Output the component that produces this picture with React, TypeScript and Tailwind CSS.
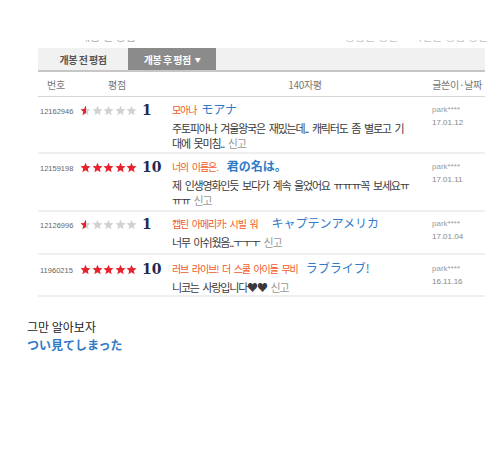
const kr = { fontFamily: '"Noto Sans CJK KR", "Noto Sans", sans-serif' };
const jp = { fontFamily: '"Noto Sans CJK JP", "Noto Sans", sans-serif' };
const latin = { fontFamily: '"Liberation Sans", "DejaVu Sans", sans-serif' };

type Row = {
  id: string;
  score: number;
  title: string;
  jp: string;
  jpBold?: boolean;
  gap: string;
  lines: string[];
  user: string;
  date: string;
  h: string;
  pt: string;
};

const rows: Row[] = [
  {
    id: "12162946",
    score: 1,
    title: "모아나",
    jp: "モアナ",
    gap: "ml-[5px]",
    lines: ["주토피아나 겨울왕국은 재밌는데.. 캐릭터도 좀 별로고 기", "대에 못미침.."],
    user: "park****",
    date: "17.01.12",
    h: "h-[57px]",
    pt: "pt-[4px]",
  },
  {
    id: "12159198",
    score: 10,
    title: "너의 이름은.",
    jp: "君の名は。",
    jpBold: true,
    gap: "ml-[9px]",
    lines: ["제 인생영화인듯 보다가 계속 울었어요 ㅠㅠㅠ꼭 보세요ㅠ", "ㅠㅠ"],
    user: "park****",
    date: "17.01.11",
    h: "h-[58px]",
    pt: "pt-[4px]",
  },
  {
    id: "12126996",
    score: 1,
    title: "캡틴 아메리카: 시빌 워",
    jp: "キャプテンアメリカ",
    gap: "ml-[14px]",
    lines: ["너무 아쉬웠음..ㅜㅜㅜ"],
    user: "park****",
    date: "17.01.04",
    h: "h-[43px]",
    pt: "pt-[3px]",
  },
  {
    id: "11960215",
    score: 10,
    title: "러브 라이브! 더 스쿨 아이돌 무비",
    jp: "ラブライブ!",
    gap: "ml-[8px]",
    lines: ["니코는 사랑입니다♥♥"],
    user: "park****",
    date: "16.11.16",
    h: "h-[42px]",
    pt: "pt-[5px]",
  },
];

function Star({ fill, uid }: { fill: "full" | "half" | "none"; uid: string }) {
  return (
    <svg width="11" height="11" viewBox="0 0 24 24">
      <defs>
        <linearGradient id={uid}>
          <stop offset="50%" stopColor="#e8222c" />
          <stop offset="50%" stopColor="#d2d2d2" />
        </linearGradient>
      </defs>
      <path
        d="M12 1.5l3.1 7.2 7.8.7-5.9 5.2 1.8 7.7L12 18.2l-6.8 4.1 1.8-7.7-5.9-5.2 7.8-.7z"
        fill={fill === "full" ? "#e8222c" : fill === "half" ? `url(#${uid})` : "#d2d2d2"}
      />
    </svg>
  );
}

function Stars({ score, rid }: { score: number; rid: string }) {
  return (
    <div className="flex items-center gap-[0.5px]">
      {[0, 1, 2, 3, 4].map((i) => {
        const v = score - i * 2;
        const f = v >= 2 ? "full" : v === 1 ? "half" : "none";
        return <Star key={i} fill={f} uid={`s${rid}${i}`} />;
      })}
    </div>
  );
}

export default function App() {
  return (
    <div className="w-[500px] h-[474px] bg-white overflow-hidden" style={kr}>
      {/* text cut off above the tabs */}
      <div className="h-[48px] relative">
        <div className="absolute top-[40px] left-[80px] h-[2px] overflow-hidden text-[11px] text-[#aaa] leading-[12px]">
          <div className="-mt-[10px]">개봉 전 평점</div>
        </div>
        <div className="absolute top-[40px] left-[345px] h-[2px] overflow-hidden text-[11px] text-[#c4c4c4] leading-[12px] flex gap-[14px]">
          <div className="-mt-[10px]">공감순 정렬</div>
          <div className="-mt-[10px]">최신순 평점 정렬</div>
        </div>
      </div>

      <div className="ml-[38px] w-[447px]">
        {/* tabs */}
        <div className="flex h-[24px] bg-[#f1f1f1] border-b-2 border-[#c6c6c6] text-[10px] font-bold tracking-[-0.5px]">
          <div className="w-[90px] flex items-center justify-center text-[#555]">개봉 전 평점</div>
          <div className="w-[88px] flex items-center justify-center bg-[#8b8b8b] text-white gap-[4px]">
            개봉 후 평점 <span className="text-[6px]">▼</span>
          </div>
        </div>

        {/* header */}
        <div className="flex items-center h-[25px] border-b border-[#d6d6d6] text-[10px] text-[#777] tracking-[-0.3px]">
          <div className="w-[40px] pl-[9px]">번호</div>
          <div className="w-[94px] pl-[30px]">평점</div>
          <div className="w-[256px] text-center pl-[10px]">140자평</div>
          <div className="flex-1 text-right pr-[3px]">글쓴이·날짜</div>
        </div>

        {rows.map((r) => (
          <div key={r.id} className={`flex ${r.h} border-b-2 border-[#efefef] ${r.pt}`}>
            <div className="w-[42px] pl-[2px] pt-[7px] text-[7.5px] text-[#666] leading-none" style={latin}>
              {r.id}
            </div>
            <div className="w-[92px] flex items-start pt-[4px]">
              <Stars score={r.score} rid={r.id} />
              <span
                className="ml-[5px] -mt-[2px] text-[14px] font-bold text-[#1e2a4f] leading-none"
                style={{ fontFamily: '"DejaVu Serif", "Liberation Serif", serif' }}
              >
                {r.score}
              </span>
            </div>
            <div className="w-[258px]">
              <div className="flex items-baseline leading-[16px] whitespace-nowrap">
                <span className="text-[10px] text-[#f05a28] tracking-[-1.1px] [word-spacing:2.5px]">{r.title}</span>
                <span
                  className={`${r.gap} text-[12px] text-[#2f7bc8] ${r.jpBold ? "font-bold" : ""}`}
                  style={jp}
                >
                  {r.jp}
                </span>
              </div>
              <div className="mt-[3px] text-[11px] text-[#3a3a3a] leading-[15px] tracking-[-1.2px] [word-spacing:2.5px] whitespace-nowrap">
                {r.lines.map((l, i) => (
                  <div key={i}>
                    {l}
                    {i === r.lines.length - 1 && <span className="text-[#999]"> 신고</span>}
                  </div>
                ))}
              </div>
            </div>
            <div className="flex-1 pl-[2px] pt-[2px] text-[8px] leading-[13px]" style={latin}>
              <div className="text-[#9a9a9a]">{r.user}</div>
              <div className="text-[#888]">{r.date}</div>
            </div>
          </div>
        ))}
      </div>

      <div className="ml-[27px] mt-[21px] text-[12px] leading-[18px]">
        <div className="text-[#222]">그만 알아보자</div>
        <div className="text-[#2f7bc8] font-bold" style={jp}>
          つい見てしまった
        </div>
      </div>
    </div>
  );
}
